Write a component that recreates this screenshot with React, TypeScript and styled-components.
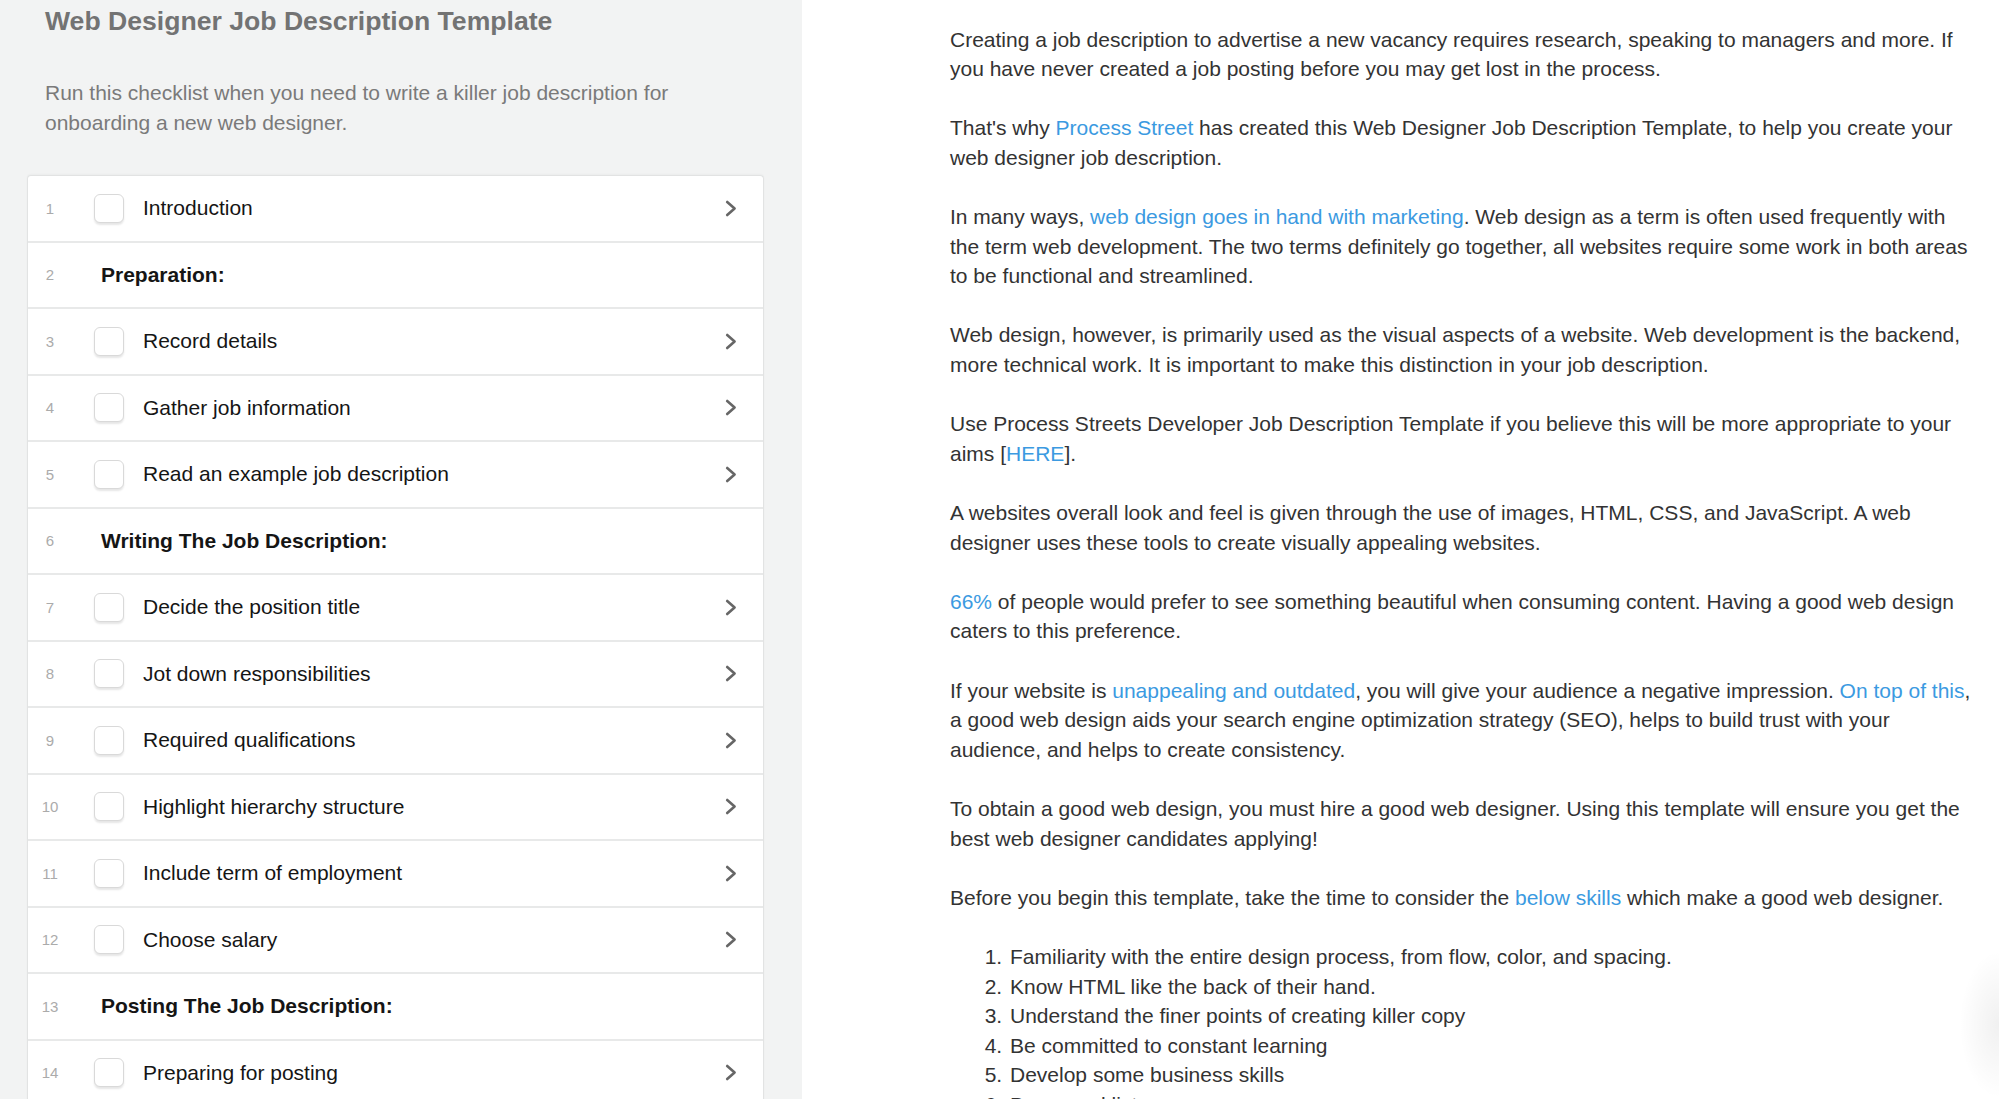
import React from "react";
import styled, { createGlobalStyle } from "styled-components";

const GlobalStyle = createGlobalStyle`
  html, body {
    margin: 0;
    padding: 0;
    background: #ffffff;
  }
  body {
    font-family: "Liberation Sans", Arial, Helvetica, sans-serif;
    -webkit-font-smoothing: antialiased;
  }
  * { box-sizing: border-box; }
`;

const Page = styled.div`
  position: relative;
  display: grid;
  grid-template-columns: 802px 1fr;
  width: 1999px;
  height: 1099px;
  overflow: hidden;
`;

const Sidebar = styled.aside`
  background: #f2f3f3;
  padding: 6px 38px 0 27px;
  overflow: hidden;
`;

const Header = styled.header`
  padding-left: 18px;
`;

const Title = styled.h1`
  margin: 0;
  font-size: 26.6px;
  line-height: 30px;
  font-weight: 700;
  color: #737373;
`;

const Intro = styled.p`
  margin: 42px 0 0;
  font-size: 21px;
  line-height: 30px;
  color: #7a7a7a;
  max-width: 660px;
`;

const Checklist = styled.ol`
  list-style: none;
  margin: 37px 0 0;
  padding: 0;
  background: #ffffff;
  border: 1px solid #e2e3e3;
  border-bottom: none;
  border-radius: 4px 4px 0 0;
  box-shadow: 0 -1px 2px rgba(0, 0, 0, 0.03);
`;

const Row = styled.li<{ $heading?: boolean }>`
  display: flex;
  align-items: center;
  height: 66.5px;
  border-bottom: 2px solid #e8e9e9;
  padding-right: 26px;
  color: #151515;
  font-size: 21px;
  font-weight: ${(p) => (p.$heading ? 700 : 400)};
`;

const Num = styled.span`
  flex: 0 0 44px;
  text-align: center;
  font-size: 15px;
  font-weight: 400;
  color: #ababab;
`;

const Box = styled.span`
  flex: 0 0 30px;
  height: 29px;
  margin: 0 19px 0 22px;
  border: 1px solid #d9d9d9;
  border-radius: 6px;
  background: #ffffff;
  box-shadow: 0 2px 2px rgba(0, 0, 0, 0.1);
`;

const Label = styled.span<{ $heading?: boolean }>`
  flex: 1;
  margin-left: ${(p) => (p.$heading ? "29px" : "0")};
  white-space: nowrap;
`;

const Chevron = styled.svg`
  flex: 0 0 12px;
  width: 12px;
  height: 17px;
`;

const Content = styled.main`
  padding: 24.5px 0 0 148px;
  color: #333333;
  font-size: 21px;
  line-height: 29.6px;
`;

const Article = styled.article`
  width: 1026px;
`;

const Para = styled.p`
  margin: 0 0 29.6px;
`;

const Link = styled.a`
  color: #3b9ae1;
  text-decoration: none;
`;

const Skills = styled.ol`
  margin: 0;
  padding-left: 58px;
`;

const Skill = styled.li`
  padding-left: 2px;
`;

const EdgeShade = styled.div`
  position: absolute;
  right: 0;
  top: 950px;
  width: 40px;
  height: 149px;
  background: radial-gradient(ellipse at right center, rgba(0, 0, 0, 0.06), rgba(0, 0, 0, 0) 70%);
  pointer-events: none;
`;

type Item = { n: number; text: string; heading?: boolean };

const items: Item[] = [
  { n: 1, text: "Introduction" },
  { n: 2, text: "Preparation:", heading: true },
  { n: 3, text: "Record details" },
  { n: 4, text: "Gather job information" },
  { n: 5, text: "Read an example job description" },
  { n: 6, text: "Writing The Job Description:", heading: true },
  { n: 7, text: "Decide the position title" },
  { n: 8, text: "Jot down responsibilities" },
  { n: 9, text: "Required qualifications" },
  { n: 10, text: "Highlight hierarchy structure" },
  { n: 11, text: "Include term of employment" },
  { n: 12, text: "Choose salary" },
  { n: 13, text: "Posting The Job Description:", heading: true },
  { n: 14, text: "Preparing for posting" },
];

const ChevronIcon = () => (
  <Chevron viewBox="0 0 12 17" aria-hidden="true">
    <path
      d="M2.2 2 L9.6 8.5 L2.2 15"
      fill="none"
      stroke="#666666"
      strokeWidth="2.6"
      strokeLinecap="round"
      strokeLinejoin="round"
    />
  </Chevron>
);

export default function App() {
  return (
    <>
      <GlobalStyle />
      <Page>
        <Sidebar>
          <Header>
            <Title>Web Designer Job Description Template</Title>
            <Intro>
              Run this checklist when you need to write a killer job description for onboarding a
              new web designer.
            </Intro>
          </Header>
          <Checklist>
            {items.map((it) => (
              <Row key={it.n} $heading={it.heading}>
                <Num>{it.n}</Num>
                {!it.heading && <Box />}
                <Label $heading={it.heading}>{it.text}</Label>
                {!it.heading && <ChevronIcon />}
              </Row>
            ))}
          </Checklist>
        </Sidebar>
        <Content>
          <Article>
            <Para>
              Creating a job description to advertise a new vacancy requires research, speaking to
              managers and more. If you have never created a job posting before you may get lost in
              the process.
            </Para>
            <Para>
              That's why <Link href="#">Process Street</Link> has created this Web Designer Job
              Description Template, to help you create your web designer job description.
            </Para>
            <Para>
              In many ways, <Link href="#">web design goes in hand with marketing</Link>. Web design
              as a term is often used frequently with the term web development. The two terms
              definitely go together, all websites require some work in both areas to be functional
              and streamlined.
            </Para>
            <Para>
              Web design, however, is primarily used as the visual aspects of a website. Web
              development is the backend, more technical work. It is important to make this
              distinction in your job description.
            </Para>
            <Para>
              Use Process Streets Developer Job Description Template if you believe this will be
              more appropriate to your aims [<Link href="#">HERE</Link>].
            </Para>
            <Para>
              A websites overall look and feel is given through the use of images, HTML, CSS, and
              JavaScript. A web designer uses these tools to create visually appealing websites.
            </Para>
            <Para>
              <Link href="#">66%</Link> of people would prefer to see something beautiful when
              consuming content. Having a good web design caters to this preference.
            </Para>
            <Para>
              If your website is <Link href="#">unappealing and outdated</Link>, you will give your
              audience a negative impression. <Link href="#">On top of this</Link>, a good web
              design aids your search engine optimization strategy (SEO), helps to build trust with
              your audience, and helps to create consistency.
            </Para>
            <Para>
              To obtain a good web design, you must hire a good web designer. Using this template
              will ensure you get the best web designer candidates applying!
            </Para>
            <Para>
              Before you begin this template, take the time to consider the{" "}
              <Link href="#">below skills</Link> which make a good web designer.
            </Para>
            <Skills>
              <Skill>Familiarity with the entire design process, from flow, color, and spacing.</Skill>
              <Skill>Know HTML like the back of their hand.</Skill>
              <Skill>Understand the finer points of creating killer copy</Skill>
              <Skill>Be committed to constant learning</Skill>
              <Skill>Develop some business skills</Skill>
              <Skill>Be a good listener</Skill>
            </Skills>
          </Article>
        </Content>
        <EdgeShade />
      </Page>
    </>
  );
}
